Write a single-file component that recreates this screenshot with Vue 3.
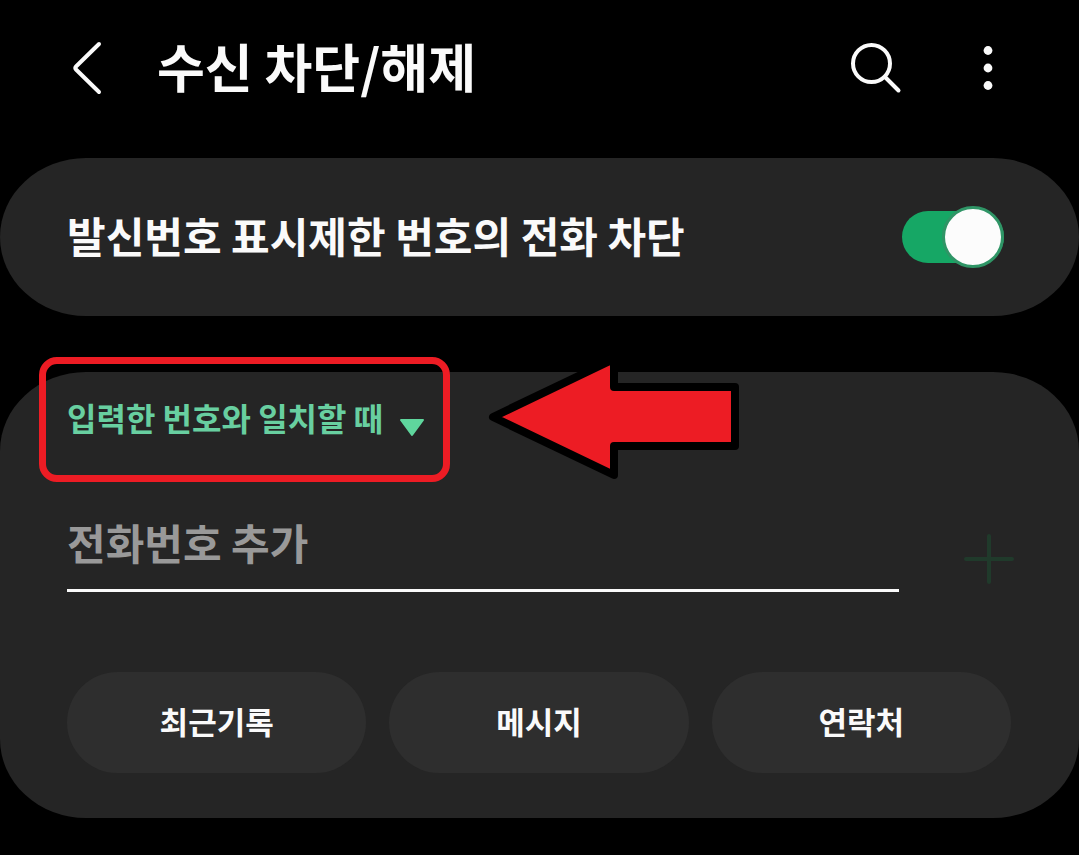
<script setup>
import { ref } from 'vue'

const blockHidden = ref(true)
const matchRule = ref('exact')
const phone = ref('')
const sources = ['최근기록', '메시지', '연락처']
</script>

<template>
  <div class="screen">
    <header class="bar">
      <button class="icon-btn back" type="button" aria-label="뒤로">
        <svg width="32" height="56" viewBox="0 0 32 56">
          <path d="M29 4 6 26.500q-1.500 1.500 0 3L29 52" />
        </svg>
      </button>
      <h1>수신 차단/해제</h1>
      <button class="icon-btn" type="button" aria-label="검색">
        <svg width="56" height="56" viewBox="0 0 56 56">
          <circle cx="23.500" cy="23.500" r="18.500" />
          <path d="M37 37 50.500 50.500" />
        </svg>
      </button>
      <button class="icon-btn more" type="button" aria-label="더보기">
        <svg class="dots" width="16" height="56" viewBox="0 0 16 56">
          <circle cx="8" cy="10.500" r="4.400" />
          <circle cx="8" cy="28" r="4.400" />
          <circle cx="8" cy="45.500" r="4.400" />
        </svg>
      </button>
    </header>

    <main>
      <section class="card toggle-card">
        <label for="hidden">발신번호 표시제한 번호의 전화 차단</label>
        <input id="hidden" v-model="blockHidden" class="switch" type="checkbox" role="switch" />
      </section>

      <section class="card form-card">
        <div class="rule">
          <select v-model="matchRule" aria-label="차단 조건">
            <option value="exact">입력한 번호와 일치할 때</option>
          </select>
          <svg class="caret" width="26" height="20" viewBox="0 0 26 20">
            <path d="M2 2H24L13 17Z" />
          </svg>
          <div class="highlight"></div>
        </div>

        <div class="entry">
          <input v-model="phone" type="tel" placeholder="전화번호 추가" aria-label="전화번호 추가" />
          <button class="icon-btn add" type="button" aria-label="추가">
            <svg width="52" height="52" viewBox="0 0 52 52">
              <path d="M26 3V49M3 26H49" />
            </svg>
          </button>
        </div>

        <div class="sources">
          <button v-for="s in sources" :key="s" type="button">{{ s }}</button>
        </div>

        <svg class="pointer" width="260" height="136" viewBox="0 0 260 136" aria-hidden="true">
          <path d="M8 67 129 9V37H250V96H129V125Z" />
        </svg>
      </section>
    </main>
  </div>
</template>

<style>
body {
  margin: 0;
  background: #000;
}
</style>

<style scoped>
.screen {
  min-height: 100vh;
  background: #000;
  color: #fafafa;
  font-family: "Noto Sans CJK KR", sans-serif;
}
button,
input,
select {
  margin: 0;
  padding: 0;
  border: 0;
  background: none;
  color: inherit;
  font-family: inherit;
}
svg {
  display: block;
}
.bar {
  display: flex;
  align-items: center;
  box-sizing: border-box;
  height: 158px;
  padding: 0 83px 22px 70px;
}
h1 {
  flex: 1;
  margin: 0;
  padding-bottom: 4px;
  font-size: 52px;
  line-height: 72px;
  font-weight: 700;
}
.icon-btn svg {
  fill: none;
  stroke: #fafafa;
  stroke-width: 4;
  stroke-linecap: round;
}
.back {
  margin-right: 55px;
}
.more {
  margin-left: 76px;
}
.icon-btn .dots {
  fill: #fafafa;
  stroke: none;
}
.card {
  background: #252525;
  border-radius: 86px / 79px;
}
.toggle-card {
  display: flex;
  align-items: center;
  justify-content: space-between;
  height: 158px;
  padding: 0 75px 0 67px;
}
.toggle-card label {
  padding-bottom: 4px;
  font-size: 42px;
  line-height: 60px;
  font-weight: 700;
}
.switch {
  position: relative;
  appearance: none;
  width: 102px;
  height: 52px;
  border-radius: 26px;
  background: #16a765;
}
.switch::after {
  content: "";
  position: absolute;
  top: -5px;
  right: 0;
  box-sizing: border-box;
  width: 62px;
  height: 62px;
  border: 3px solid #2f9566;
  border-radius: 50%;
  background: #fcfcfc;
}
.switch:not(:checked) {
  background: #666;
}
.form-card {
  position: relative;
  margin-top: 56px;
  padding: 15px 68px 45px 67px;
}
.rule {
  position: relative;
  width: fit-content;
}
.rule select {
  appearance: none;
  height: 64px;
  padding-right: 41px;
  padding-bottom: 4px;
  color: #68cfa0;
  font-size: 32px;
  font-weight: 700;
}
.caret {
  position: absolute;
  right: 0;
  top: 31px;
  pointer-events: none;
  fill: #5fd69d;
  stroke: #5fd69d;
  stroke-width: 2;
  stroke-linejoin: round;
}
.highlight {
  position: absolute;
  inset: -30px -25px -31px -28px;
  border: 7px solid #ed1c24;
  border-radius: 18px;
  pointer-events: none;
}
.entry {
  display: flex;
  align-items: flex-end;
  gap: 64px;
  margin: 47px -4px 0 0;
}
.entry input {
  flex: 1;
  min-width: 0;
  box-sizing: border-box;
  height: 94px;
  padding-bottom: 4px;
  border-bottom: 3px solid #fafafa;
  font-size: 42px;
  font-weight: 700;
}
.entry input::placeholder {
  color: #999;
  opacity: 1;
}
.add {
  margin-bottom: 7px;
}
.icon-btn.add svg {
  stroke: #203a2b;
}
.sources {
  display: grid;
  grid-template-columns: repeat(3, 1fr);
  gap: 23px;
  margin-top: 80px;
}
.sources button {
  height: 101px;
  padding-bottom: 4px;
  border-radius: 51px;
  background: #2e2e2e;
  font-size: 31px;
  font-weight: 700;
}
.pointer {
  position: absolute;
  left: 485px;
  top: -22px;
  fill: #ed1c24;
  stroke: #000;
  stroke-width: 8;
  stroke-linejoin: round;
  pointer-events: none;
}
</style>
